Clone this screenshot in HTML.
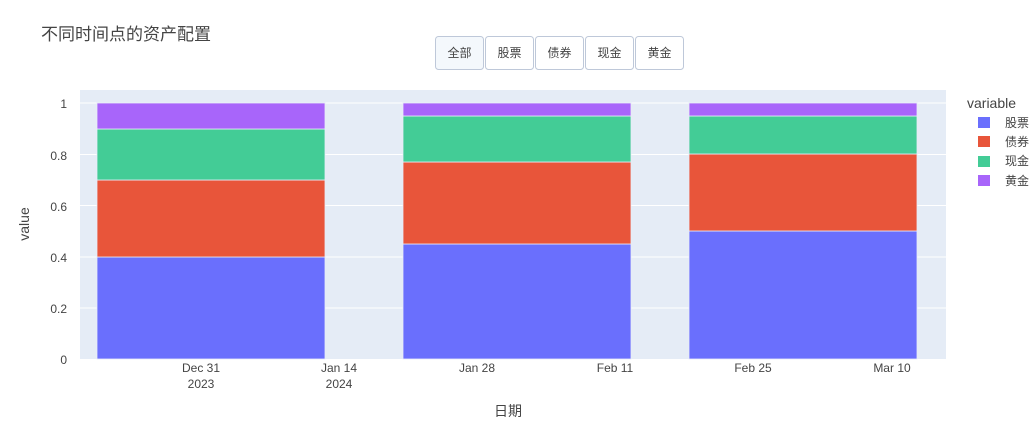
<!DOCTYPE html><html><head><meta charset="utf-8"><style>body{margin:0;background:#fff}svg text{font-family:"Liberation Sans","Noto Sans CJK SC",sans-serif}</style></head><body>
<svg width="1032" height="432" xmlns="http://www.w3.org/2000/svg">
<rect x="80" y="90" width="866" height="269" fill="#e5ecf6"/>
<g stroke="#fff" stroke-width="1">
<line x1="80" x2="946" y1="308" y2="308"/><line x1="80" x2="946" y1="257" y2="257"/><line x1="80" x2="946" y1="205.5" y2="205.5"/><line x1="80" x2="946" y1="154.5" y2="154.5"/><line x1="80" x2="946" y1="103" y2="103"/>
</g>
<g stroke="#e8ecf8" stroke-width="0.8">
<rect x="97" y="257" width="228" height="102" fill="#6a6ffd"/><rect x="97" y="180" width="228" height="77" fill="#e8553a"/><rect x="97" y="129" width="228" height="51" fill="#43cc96"/><rect x="97" y="103" width="228" height="26" fill="#a865fa"/>
<rect x="403" y="244" width="228" height="115" fill="#6a6ffd"/><rect x="403" y="162" width="228" height="82" fill="#e8553a"/><rect x="403" y="116" width="228" height="46" fill="#43cc96"/><rect x="403" y="103" width="228" height="13" fill="#a865fa"/>
<rect x="689" y="231" width="228" height="128" fill="#6a6ffd"/><rect x="689" y="154" width="228" height="77" fill="#e8553a"/><rect x="689" y="116" width="228" height="38" fill="#43cc96"/><rect x="689" y="103" width="228" height="13" fill="#a865fa"/>
</g>
<g fill="#444" font-size="12" text-anchor="end">
<text x="67" y="364">0</text><text x="67" y="313">0.2</text><text x="67" y="262">0.4</text><text x="67" y="211">0.6</text><text x="67" y="160">0.8</text><text x="67" y="108">1</text>
</g>
<g fill="#444" font-size="12" text-anchor="middle">
<text x="201" y="372">Dec 31</text><text x="201" y="388">2023</text><text x="339" y="372">Jan 14</text><text x="339" y="388">2024</text><text x="477" y="372">Jan 28</text><text x="615" y="372">Feb 11</text><text x="753" y="372">Feb 25</text><text x="892" y="372">Mar 10</text>
</g>
<text x="508" y="416" fill="#444" font-size="14" text-anchor="middle">日期</text>
<text transform="translate(29,224) rotate(-90)" fill="#444" font-size="14" text-anchor="middle">value</text>
<text x="41" y="40" fill="#444" font-size="17">不同时间点的资产配置</text>
<g font-size="12" fill="#444" text-anchor="middle">
<rect x="435.5" y="36.5" width="48" height="33" rx="3" fill="#f4f8fc" stroke="#bec8d9"/><text x="459.5" y="57">全部</text>
<rect x="485.5" y="36.5" width="48" height="33" rx="3" fill="#fff" stroke="#bec8d9"/><text x="509.5" y="57">股票</text>
<rect x="535.5" y="36.5" width="48" height="33" rx="3" fill="#fff" stroke="#bec8d9"/><text x="559.5" y="57">债券</text>
<rect x="585.5" y="36.5" width="48" height="33" rx="3" fill="#fff" stroke="#bec8d9"/><text x="609.5" y="57">现金</text>
<rect x="635.5" y="36.5" width="48" height="33" rx="3" fill="#fff" stroke="#bec8d9"/><text x="659.5" y="57">黄金</text>
</g>
<text x="967" y="108" fill="#444" font-size="14">variable</text>
<g font-size="12" fill="#444">
<rect x="978" y="117" width="12" height="11" fill="#6a6ffd"/><text x="1005" y="127">股票</text>
<rect x="978" y="136" width="12" height="11" fill="#e8553a"/><text x="1005" y="146">债券</text>
<rect x="978" y="156" width="12" height="11" fill="#43cc96"/><text x="1005" y="165">现金</text>
<rect x="978" y="175" width="12" height="11" fill="#a865fa"/><text x="1005" y="185">黄金</text>
</g>
</svg></body></html>
